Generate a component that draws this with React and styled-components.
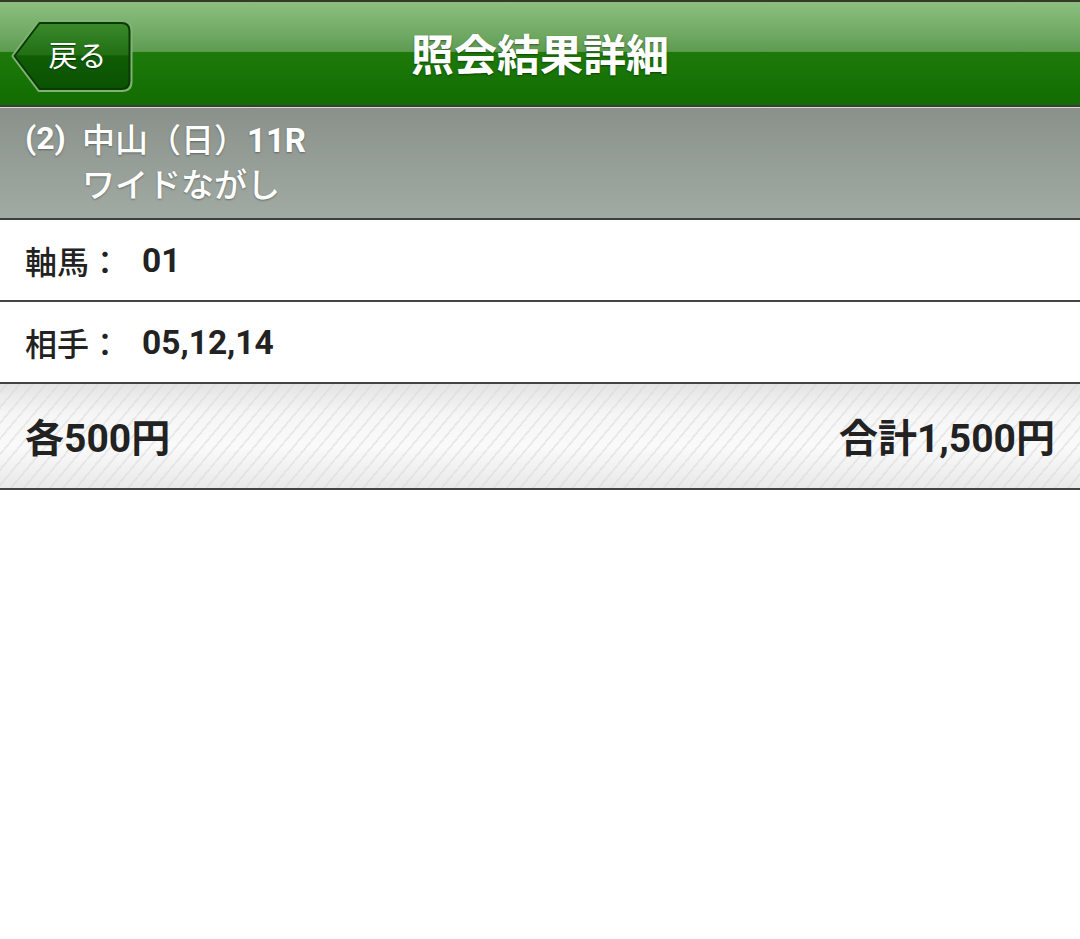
import React from 'react';
import styled, { createGlobalStyle } from 'styled-components';

const GlobalStyle = createGlobalStyle`
  html, body {
    margin: 0;
    padding: 0;
    background: #ffffff;
  }
  body {
    font-family: Roboto, "Noto Sans CJK JP", sans-serif;
  }
`;

const race = {
  no: '(2)',
  name: '中山（日）',
  round: '11R',
  type: 'ワイドながし',
};

const rows = [
  { label: '軸馬：', value: '01' },
  { label: '相手：', value: '05,12,14' },
];

const Page = styled.main`
  width: 1080px;
`;

const Header = styled.header`
  position: relative;
  height: 103px;
  border-top: 2px solid #38382a;
  border-bottom: 2px solid #3a3a36;
  box-shadow: 0 1px 0 #d6dbd6;
  background: linear-gradient(
    to bottom,
    #8cbf7f 0%,
    #76ae69 25%,
    #5e9b51 48%,
    #1d7a0a 49%,
    #177305 75%,
    #136c02 100%
  );
  display: flex;
  align-items: center;
  justify-content: center;
`;

const Title = styled.h1`
  margin: 0;
  font-family: "Noto Sans CJK JP", sans-serif;
  font-weight: 700;
  font-size: 43px;
  color: #ffffff;
  text-shadow: 0 1px 2px rgba(0, 0, 0, 0.45);
  padding-bottom: 4px;
`;

const BackButton = styled.button`
  position: absolute;
  left: 11px;
  top: 16px;
  width: 123px;
  height: 76px;
  padding: 0 0 0 10px;
  border: none;
  background: none;
  cursor: pointer;
  display: flex;
  align-items: center;
  justify-content: center;
  font-family: "Noto Sans CJK JP", sans-serif;
  font-size: 29px;
  font-weight: 400;
  color: #ffffff;
  text-shadow: 0 1px 1px rgba(0, 0, 0, 0.5);

  svg {
    position: absolute;
    left: 0;
    top: 0;
  }

  span {
    position: relative;
    margin-top: -4px;
  }
`;

const RaceInfo = styled.section`
  margin-top: 1px;
  height: 112px;
  box-sizing: border-box;
  padding: 7px 25px 0;
  background: linear-gradient(to bottom, #8a918b 0%, #a1aaa3 100%);
  border-bottom: 2px solid #3c3f3c;
  display: grid;
  grid-template-columns: 57px auto;
  grid-auto-rows: 45px;
  align-items: center;
  color: #ffffff;
  font-size: 33px;
  text-shadow: 0 1px 2px rgba(0, 0, 0, 0.35);
`;

const RaceNo = styled.span`
  font-family: Roboto, sans-serif;
  font-weight: 700;
  font-size: 32px;
`;

const RaceName = styled.span`
  font-family: "Noto Sans CJK JP", sans-serif;
  font-weight: 500;
`;

const RaceRound = styled.span`
  font-family: Roboto, sans-serif;
  font-weight: 700;
  font-size: 33px;
`;

const Row = styled.div`
  height: 80px;
  border-bottom: 2px solid #444444;
  display: flex;
  align-items: center;
  padding: 0 25px;
  color: #222222;
  font-size: 32px;
`;

const RowLabel = styled.span`
  font-family: "Noto Sans CJK JP", sans-serif;
  font-weight: 500;
  width: 117px;
`;

const RowValue = styled.span`
  font-family: Roboto, sans-serif;
  font-weight: 700;
  font-size: 33.5px;
`;

const TotalBar = styled.div`
  height: 104px;
  border-bottom: 2px solid #444444;
  display: flex;
  align-items: center;
  justify-content: space-between;
  padding: 0 25px;
  color: #222222;
  font-size: 39px;
  background:
    repeating-linear-gradient(
      -50deg,
      rgba(255, 255, 255, 0) 0px,
      rgba(255, 255, 255, 0) 8px,
      rgba(215, 215, 215, 0.45) 8px,
      rgba(215, 215, 215, 0.45) 10px
    ),
    linear-gradient(to bottom, #e4e4e4 0%, #f6f6f6 30%, #fafafa 60%, #e9e9e9 100%);
`;

const Amount = styled.span`
  font-family: Roboto, "Noto Sans CJK JP", sans-serif;
  font-weight: 700;
  padding-bottom: 2px;
`;

function BackShape() {
  return (
    <svg width="123" height="76" viewBox="0 0 123 76">
      <defs>
        <linearGradient id="backFill" x1="0" y1="0" x2="0" y2="1">
          <stop offset="0" stopColor="#3a8a2c" />
          <stop offset="0.48" stopColor="#226f14" />
          <stop offset="0.5" stopColor="#0f5d04" />
          <stop offset="1" stopColor="#0a5202" />
        </linearGradient>
      </defs>
      <path
        d="M2 38 L28 3.5 H111 Q120 3.5 120 12.5 V63.5 Q120 72.5 111 72.5 H28 Z"
        fill="none"
        stroke="#7fb373"
        strokeWidth="3"
        strokeLinejoin="round"
      />
      <path
        d="M3.5 38 L28.5 5 H110.5 Q118.5 5 118.5 13 V63 Q118.5 71 110.5 71 H28.5 Z"
        fill="url(#backFill)"
        stroke="#0b3a05"
        strokeWidth="2"
        strokeLinejoin="round"
      />
    </svg>
  );
}

export default function App() {
  return (
    <Page>
      <GlobalStyle />
      <Header>
        <BackButton type="button">
          <BackShape />
          <span>戻る</span>
        </BackButton>
        <Title>照会結果詳細</Title>
      </Header>

      <RaceInfo>
        <RaceNo>{race.no}</RaceNo>
        <span>
          <RaceName>{race.name}</RaceName>
          <RaceRound>{race.round}</RaceRound>
        </span>
        <span />
        <RaceName>{race.type}</RaceName>
      </RaceInfo>

      {rows.map((row) => (
        <Row key={row.label}>
          <RowLabel>{row.label}</RowLabel>
          <RowValue>{row.value}</RowValue>
        </Row>
      ))}

      <TotalBar>
        <Amount>各500円</Amount>
        <Amount>合計1,500円</Amount>
      </TotalBar>
    </Page>
  );
}
